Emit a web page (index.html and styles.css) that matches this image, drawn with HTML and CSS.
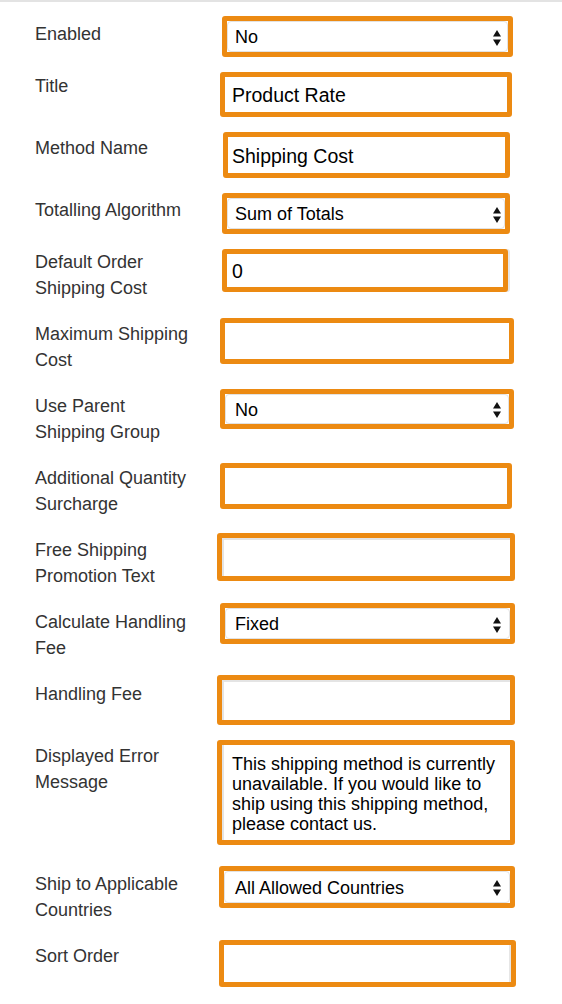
FILE: index.html
```html
<!DOCTYPE html>
<html lang="en">
<head>
<meta charset="utf-8">
<title>Product Rate Shipping</title>
<link rel="stylesheet" href="styles.css">
</head>
<body>
<form class="page">
  <div class="row r-enabled">
    <label class="label">Enabled</label>
    <div class="field select"><div class="select-box"><span>No</span><svg class="arrows" width="8" height="16" viewBox="0 0 8 16"><path d="M0 6.5 L4 0 L8 6.5 Z M0 9.5 L8 9.5 L4 16 Z"/></svg></div></div>
  </div>
  <div class="row r-title">
    <label class="label">Title</label>
    <div class="field"><input class="text" type="text" value="Product Rate"></div>
  </div>
  <div class="row r-method">
    <label class="label">Method Name</label>
    <div class="field"><input class="text" type="text" value="Shipping Cost"></div>
  </div>
  <div class="row r-totalling">
    <label class="label">Totalling Algorithm</label>
    <div class="field select"><div class="select-box"><span>Sum of Totals</span><svg class="arrows" width="8" height="16" viewBox="0 0 8 16"><path d="M0 6.5 L4 0 L8 6.5 Z M0 9.5 L8 9.5 L4 16 Z"/></svg></div></div>
  </div>
  <div class="row r-default">
    <label class="label">Default Order<br>Shipping Cost</label>
    <div class="field shadow-right"><input class="text" type="text" value="0"></div>
  </div>
  <div class="row r-max">
    <label class="label">Maximum Shipping<br>Cost</label>
    <div class="field"><input class="text" type="text" value=""></div>
  </div>
  <div class="row r-parent">
    <label class="label">Use Parent<br>Shipping Group</label>
    <div class="field select"><div class="select-box"><span>No</span><svg class="arrows" width="8" height="16" viewBox="0 0 8 16"><path d="M0 6.5 L4 0 L8 6.5 Z M0 9.5 L8 9.5 L4 16 Z"/></svg></div></div>
  </div>
  <div class="row r-additional">
    <label class="label">Additional Quantity<br>Surcharge</label>
    <div class="field"><input class="text" type="text" value=""></div>
  </div>
  <div class="row r-free">
    <label class="label">Free Shipping<br>Promotion Text</label>
    <div class="field"><input class="text inset" type="text" value=""></div>
  </div>
  <div class="row r-calc">
    <label class="label">Calculate Handling<br>Fee</label>
    <div class="field select"><div class="select-box"><span>Fixed</span><svg class="arrows" width="8" height="16" viewBox="0 0 8 16"><path d="M0 6.5 L4 0 L8 6.5 Z M0 9.5 L8 9.5 L4 16 Z"/></svg></div></div>
  </div>
  <div class="row r-handling">
    <label class="label">Handling Fee</label>
    <div class="field"><input class="text inset" type="text" value=""></div>
  </div>
  <div class="row r-error">
    <label class="label">Displayed Error<br>Message</label>
    <div class="field"><textarea class="area">This shipping method is currently
unavailable. If you would like to
ship using this shipping method,
please contact us.</textarea></div>
  </div>
  <div class="row r-ship">
    <label class="label">Ship to Applicable<br>Countries</label>
    <div class="field select"><div class="select-box"><span>All Allowed Countries</span><svg class="arrows" width="8" height="16" viewBox="0 0 8 16"><path d="M0 6.5 L4 0 L8 6.5 Z M0 9.5 L8 9.5 L4 16 Z"/></svg></div></div>
  </div>
  <div class="row r-sort">
    <label class="label">Sort Order</label>
    <div class="field"><input class="text inset-right" type="text" value=""></div>
  </div>
</form>
</body>
</html>
```
FILE: styles.css
```css
* { box-sizing: border-box; }

html, body {
  margin: 0;
  background: #ffffff;
}

body {
  font-family: "Liberation Sans", Arial, Helvetica, sans-serif;
}

.page {
  border-top: 2px solid #e3e3e3;
  padding: 14px 0 0 35px;
  margin: 0;
}

.row {
  display: grid;
  grid-template-columns: 185px 1fr;
  align-items: start;
  height: var(--h);
}

.label {
  padding-top: var(--lt);
  font-size: 18px;
  line-height: 26px;
  color: #333333;
  white-space: nowrap;
}

.field {
  margin-left: var(--x);
  width: var(--w);
  height: var(--fh);
  border: 5px solid #ec8a12;
  border-radius: 3px;
  background: #ffffff;
  display: flex;
}

.shadow-right {
  box-shadow: 2px 0 0 #e6e6e6;
}

.text {
  appearance: none;
  -webkit-appearance: none;
  flex: 1;
  min-width: 0;
  height: 100%;
  margin: 0;
  border: none;
  outline: none;
  background: #ffffff;
  padding: 2px 0 0 calc(7px - var(--x));
  font-family: "Liberation Sans", Arial, Helvetica, sans-serif;
  font-size: 19.5px;
  color: #000000;
}

.inset {
  box-shadow: inset 2px 2px 0 #e4e4e4;
}

.inset-right {
  box-shadow: inset -2px 0 0 #e6e6e6;
}

.select-box {
  flex: 1;
  display: flex;
  align-items: center;
  justify-content: space-between;
  border: 1px solid #e2e2e2;
  border-radius: 4px;
  padding-top: 2px;
  padding-left: calc(9px - var(--x));
  padding-right: calc(var(--x) + var(--w) - 287px);
  font-size: 18px;
  color: #000000;
  white-space: nowrap;
}

.arrows {
  display: block;
  fill: #111111;
}

.area {
  flex: 1;
  height: 100%;
  margin: 0;
  border: none;
  outline: none;
  resize: none;
  overflow: hidden;
  padding: 9px 10px 8px;
  box-shadow: inset 2px 0 0 #e4e4e4;
  font-family: "Liberation Sans", Arial, Helvetica, sans-serif;
  font-size: 18px;
  line-height: 20px;
  color: #000000;
  white-space: pre;
}

.r-enabled    { --h: 56px;  --lt: 5px; --x: 2px;  --w: 291px; --fh: 41px; }
.r-title      { --h: 60px;  --lt: 1px; --x: 0px;  --w: 292px; --fh: 45px; }
.r-method     { --h: 61px;  --lt: 3px; --x: 3px;  --w: 287px; --fh: 46px; }
.r-totalling  { --h: 56px;  --lt: 4px; --x: 2px;  --w: 288px; --fh: 41px; }
.r-default    { --h: 69px;  --lt: 0px; --x: 2px;  --w: 286px; --fh: 43px; }
.r-max        { --h: 71px;  --lt: 3px; --x: 0px;  --w: 294px; --fh: 46px; }
.r-parent     { --h: 74px;  --lt: 4px; --x: 0px;  --w: 294px; --fh: 40px; }
.r-additional { --h: 70px;  --lt: 2px; --x: 0px;  --w: 292px; --fh: 46px; }
.r-free       { --h: 70px;  --lt: 4px; --x: -3px; --w: 298px; --fh: 48px; }
.r-calc       { --h: 72px;  --lt: 6px; --x: 0px;  --w: 295px; --fh: 41px; }
.r-handling   { --h: 65px;  --lt: 6px; --x: -3px; --w: 298px; --fh: 50px; }
.r-error      { --h: 126px; --lt: 3px; --x: -3px; --w: 298px; --fh: 105px; }
.r-ship       { --h: 74px;  --lt: 5px; --x: -1px; --w: 296px; --fh: 42px; }
.r-sort       { --h: 64px;  --lt: 3px; --x: -1px; --w: 297px; --fh: 47px; }
```
